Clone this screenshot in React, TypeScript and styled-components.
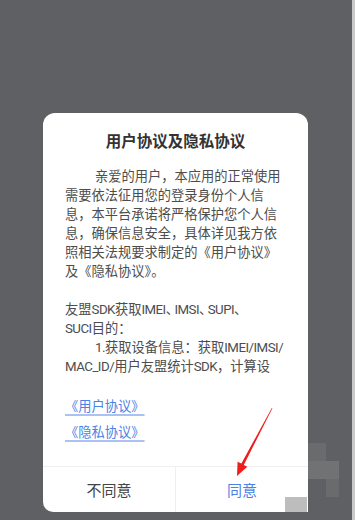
import React from "react";
import styled, { createGlobalStyle } from "styled-components";

const Global = createGlobalStyle`
  html, body { margin: 0; padding: 0; background: #5f6063; }
  body { font-family: Roboto, "Noto Sans CJK SC", sans-serif; }
`;

const Screen = styled.div`
  position: relative;
  width: 355px;
  height: 520px;
  display: flex;
  overflow: hidden;
  background: #5f6063;
`;

const Stage = styled.div`
  flex: 1;
  padding: 113px 0 0 43px;
`;

const EdgeStrip = styled.div`
  width: 3px;
  background: #c9c9c9;
`;

const Dialog = styled.div`
  width: 265px;
  height: 399px;
  background: #ffffff;
  border-radius: 12px 12px 0 10px;
  display: flex;
  flex-direction: column;
`;

const Title = styled.div`
  padding-top: 19px;
  font-size: 15.5px;
  line-height: 20px;
  font-weight: 700;
  color: #333333;
  text-align: center;
`;

const Body = styled.div`
  margin-top: 15px;
  padding: 0 20px 0 22px;
  height: 209px;
  overflow: hidden;
  font-size: 13.25px;
  line-height: 19px;
  color: #4d4d4d;
  white-space: nowrap;
`;

const Para = styled.p<{ $indent?: boolean }>`
  margin: 0;
  text-indent: ${(p) => (p.$indent ? "30px" : "0")};
`;

const Latin = styled.span`
  letter-spacing: -0.5px;
`;

const Mark = styled.span`
  font-feature-settings: "halt";
  padding-right: 2px;
`;

const Spacer = styled.div`
  height: 19px;
`;

const Links = styled.div`
  margin-top: 21px;
  padding-left: 22px;
  display: flex;
  flex-direction: column;
  gap: 6px;
`;

const Link = styled.a`
  align-self: flex-start;
  font-size: 13.25px;
  line-height: 20px;
  color: #4a82e6;
  text-decoration: underline;
  text-decoration-color: #a9c2f2;
  text-decoration-thickness: 1.5px;
  text-underline-offset: 3px;
`;

const Footer = styled.div`
  margin-top: auto;
  height: 45px;
  display: flex;
  border-top: 1px solid #efefef;
`;

const Action = styled.div<{ $primary?: boolean }>`
  flex: 1;
  display: flex;
  align-items: center;
  justify-content: center;
  font-size: 15px;
  color: ${(p) => (p.$primary ? "#4a82e6" : "#444444")};
  & + & {
    border-left: 1px solid #efefef;
  }
`;

const Mosaic = styled.div<{ $x: number; $y: number; $w: number; $h: number; $c: string }>`
  position: absolute;
  left: ${(p) => p.$x}px;
  top: ${(p) => p.$y}px;
  width: ${(p) => p.$w}px;
  height: ${(p) => p.$h}px;
  background: ${(p) => p.$c};
`;

const ArrowLayer = styled.svg`
  position: absolute;
  left: 0;
  top: 0;
  width: 355px;
  height: 520px;
  pointer-events: none;
`;

export default function App() {
  return (
    <>
      <Global />
      <Screen>
        <Stage>
          <Dialog>
            <Title>用户协议及隐私协议</Title>
            <Body>
              <Para $indent>
                亲爱的用户，本应用的正常使用
                <br />
                需要依法征用您的登录身份个人信
                <br />
                息，本平台承诺将严格保护您个人信
                <br />
                息，确保信息安全，具体详见我方依
                <br />
                照相关法规要求制定的《用户协议》
                <br />
                及《隐私协议》。
              </Para>
              <Spacer />
              <Para>
                友盟<Latin>SDK</Latin>获取<Latin>IMEI</Latin>
                <Mark>、</Mark>
                <Latin>IMSI</Latin>
                <Mark>、</Mark>
                <Latin>SUPI</Latin>
                <Mark>、</Mark>
                <br />
                <Latin>SUCI</Latin>目的：
              </Para>
              <Para $indent>
                <Latin>1.</Latin>获取设备信息：获取<Latin>IMEI/IMSI/</Latin>
                <br />
                <Latin>MAC_ID/</Latin>用户友盟统计<Latin>SDK</Latin>，计算设
              </Para>
            </Body>
            <Links>
              <Link>《用户协议》</Link>
              <Link>《隐私协议》</Link>
            </Links>
            <Footer>
              <Action>不同意</Action>
              <Action $primary>同意</Action>
            </Footer>
          </Dialog>
        </Stage>
        <EdgeStrip />
        <Mosaic $x={308} $y={443} $w={18} $h={18} $c="#6a6b6c" />
        <Mosaic $x={308} $y={461} $w={31} $h={18} $c="#717273" />
        <Mosaic $x={326} $y={479} $w={13} $h={18} $c="#6a6b6c" />
        <Mosaic $x={285} $y={497} $w={22} $h={15} $c="#bdbdbd" />
        <ArrowLayer viewBox="0 0 355 520">
          <polygon
            points="272.4,408.2 271.8,407.9 241.4,463.6 237.6,461.7 237,476 247.3,466.7 243.8,464.9"
            fill="#f01d1d"
          />
        </ArrowLayer>
      </Screen>
    </>
  );
}
